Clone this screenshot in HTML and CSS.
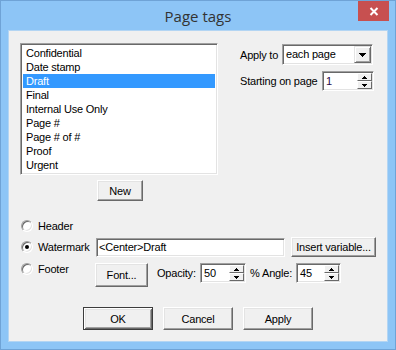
FILE: index.html
```html
<!DOCTYPE html>
<html>
<head>
<meta charset="utf-8">
<title>Page tags</title>
<link rel="stylesheet" href="styles.css">
</head>
<body>
<div class="window">
  <div class="titlebar">
    <span class="tb-spacer"></span>
    <div class="title">Page tags</div>
    <div class="close">
      <svg width="10" height="9" viewBox="0 0 10 9"><path d="M1.5 1 L8.5 8 M8.5 1 L1.5 8" stroke="#fff" stroke-width="2" fill="none"/></svg>
    </div>
  </div>
  <div class="client">
    <div class="top">
      <div class="left">
        <ul class="list">
          <li>Confidential</li>
          <li>Date stamp</li>
          <li class="sel">Draft</li>
          <li>Final</li>
          <li>Internal Use Only</li>
          <li>Page #</li>
          <li>Page # of #</li>
          <li>Proof</li>
          <li>Urgent</li>
        </ul>
        <button class="btn btn-new">New</button>
      </div>
      <div class="right">
        <div class="field">
          <span class="lbl lbl-apply">Apply to</span>
          <div class="combo">
            <span class="combo-text">each page</span>
            <span class="combo-btn"><svg width="7" height="4" viewBox="0 0 7 4" shape-rendering="crispEdges"><rect x="0" y="0" width="7" height="1"/><rect x="1" y="1" width="5" height="1"/><rect x="2" y="2" width="3" height="1"/><rect x="3" y="3" width="1" height="1"/></svg></span>
          </div>
        </div>
        <div class="field field-2">
          <span class="lbl lbl-start">Starting on page</span>
          <div class="spin spin-start">
            <span class="spin-text num">1</span>
            <span class="spin-btns">
              <span class="spin-b"><svg width="5" height="3" viewBox="0 0 5 3" shape-rendering="crispEdges"><rect x="2" y="0" width="1" height="1"/><rect x="1" y="1" width="3" height="1"/><rect x="0" y="2" width="5" height="1"/></svg></span>
              <span class="spin-b"><svg width="5" height="3" viewBox="0 0 5 3" shape-rendering="crispEdges"><rect x="0" y="0" width="5" height="1"/><rect x="1" y="1" width="3" height="1"/><rect x="2" y="2" width="1" height="1"/></svg></span>
            </span>
          </div>
        </div>
      </div>
    </div>

    <div class="options">
      <div class="opt-row row-header">
        <label class="radio-lbl"><span class="radio"></span>Header</label>
      </div>
      <div class="opt-row row-wm">
        <label class="radio-lbl"><span class="radio checked"></span>Watermark</label>
        <div class="textbox">&lt;Center&gt;Draft</div>
        <button class="btn btn-insert">Insert variable...</button>
      </div>
      <div class="opt-row row-footer">
        <label class="radio-lbl radio-lbl-footer"><span class="radio"></span>Footer</label>
        <button class="btn btn-font">Font...</button>
        <span class="lbl lbl-opacity">Opacity:</span>
        <div class="spin spin-opacity">
          <span class="spin-text">50</span>
          <span class="spin-btns">
            <span class="spin-b"><svg width="5" height="3" viewBox="0 0 5 3" shape-rendering="crispEdges"><rect x="2" y="0" width="1" height="1"/><rect x="1" y="1" width="3" height="1"/><rect x="0" y="2" width="5" height="1"/></svg></span>
            <span class="spin-b"><svg width="5" height="3" viewBox="0 0 5 3" shape-rendering="crispEdges"><rect x="0" y="0" width="5" height="1"/><rect x="1" y="1" width="3" height="1"/><rect x="2" y="2" width="1" height="1"/></svg></span>
          </span>
        </div>
        <span class="lbl lbl-pct">%</span>
        <span class="lbl lbl-angle">Angle:</span>
        <div class="spin spin-angle">
          <span class="spin-text">45</span>
          <span class="spin-btns">
            <span class="spin-b"><svg width="5" height="3" viewBox="0 0 5 3" shape-rendering="crispEdges"><rect x="2" y="0" width="1" height="1"/><rect x="1" y="1" width="3" height="1"/><rect x="0" y="2" width="5" height="1"/></svg></span>
            <span class="spin-b"><svg width="5" height="3" viewBox="0 0 5 3" shape-rendering="crispEdges"><rect x="0" y="0" width="5" height="1"/><rect x="1" y="1" width="3" height="1"/><rect x="2" y="2" width="1" height="1"/></svg></span>
          </span>
        </div>
      </div>
    </div>

    <div class="actions">
      <button class="btn btn-action btn-default">OK</button>
      <button class="btn btn-action">Cancel</button>
      <button class="btn btn-action">Apply</button>
    </div>
  </div>
</div>
</body>
</html>
```

FILE: styles.css
```css
* { box-sizing: border-box; }

body {
  margin: 0;
  font-family: "Liberation Sans", Arial, sans-serif;
  font-size: 11px;
  letter-spacing: -0.2px;
  color: #000;
  background: #8dc5f6;
}

.window {
  width: 396px;
  height: 350px;
  border: 1px solid #6fa3d6;
  background: #8dc5f6;
  display: flex;
  flex-direction: column;
}

.titlebar {
  height: 29px;
  display: grid;
  grid-template-columns: 1fr auto 1fr;
}

.title {
  font-family: "Open Sans", "Noto Sans", sans-serif;
  font-size: 15px;
  letter-spacing: 0;
  color: #333;
  line-height: 30px;
}

.close {
  justify-self: end;
  align-self: start;
  width: 31px;
  height: 20px;
  margin-right: 6px;
  background: #c75050;
  display: flex;
  align-items: center;
  justify-content: center;
}

.client {
  margin: 0 7px;
  height: 312px;
  background: #f0f0f0;
  border: 1px solid #b3d5f3;
  padding-top: 12px;
  display: flex;
  flex-direction: column;
}

.top {
  display: flex;
  margin-left: 11px;
}

.left {
  width: 198px;
  display: flex;
  flex-direction: column;
  align-items: center;
}

.list {
  width: 198px;
  height: 132px;
  margin: 0;
  padding: 1px;
  list-style: none;
  background: #fff;
  border: 1px solid;
  border-color: #a0a0a0 #fff #fff #a0a0a0;
  box-shadow: inset 1px 1px 0 #696969, inset -1px -1px 0 #e3e3e3;
}

.list li {
  height: 14px;
  line-height: 14px;
  padding-left: 3px;
  margin-left: 1px;
  margin-right: 1px;
  white-space: nowrap;
}

.list li:first-child { margin-top: 1px; }

.list li.sel {
  background: #3399ff;
  color: #fff;
}

.btn {
  font-family: "Liberation Sans", Arial, sans-serif;
  font-size: 11px;
  letter-spacing: -0.2px;
  color: #000;
  background: #f0f0f0;
  padding: 0;
  margin: 0;
  border: 1px solid;
  border-color: #fff #696969 #696969 #fff;
  box-shadow: inset -1px -1px 0 #a0a0a0, inset 1px 1px 0 #e3e3e3;
  display: flex;
  align-items: center;
  justify-content: center;
}

.btn-new {
  width: 46px;
  height: 21px;
  margin-top: 5px;
  margin-left: 2px;
}

.right {
  margin-left: 22px;
  padding-top: 1px;
  display: flex;
  flex-direction: column;
}

.field {
  display: flex;
  align-items: center;
}

.field-2 { margin-top: 6px; }

.lbl { white-space: nowrap; }
.lbl-apply { width: 42px; }
.lbl-start { width: 82px; }

.combo {
  width: 91px;
  height: 21px;
  background: #fff;
  border: 1px solid;
  border-color: #a0a0a0 #fff #fff #a0a0a0;
  box-shadow: inset 1px 1px 0 #696969, inset -1px -1px 0 #e3e3e3;
  padding: 1px;
  display: flex;
  align-items: stretch;
}

.combo-text {
  flex: 1;
  padding-left: 2px;
  line-height: 17px;
}

.combo-btn {
  width: 17px;
  background: #f0f0f0;
  border: 1px solid;
  border-color: #e3e3e3 #696969 #696969 #e3e3e3;
  box-shadow: inset 1px 1px 0 #fff, inset -1px -1px 0 #a0a0a0;
  display: flex;
  align-items: center;
  justify-content: center;
}

.spin {
  height: 20px;
  background: #fff;
  border: 1px solid;
  border-color: #a0a0a0 #fff #fff #a0a0a0;
  box-shadow: inset 1px 1px 0 #696969, inset -1px -1px 0 #e3e3e3;
  padding: 1px;
  display: flex;
}

.spin-start { width: 52px; }
.spin-opacity { width: 46px; }
.spin-angle { width: 45px; }

.spin-text {
  flex: 1;
  padding-left: 2px;
  line-height: 16px;
}

.num { color: #2a0848; }

.spin-btns {
  width: 15px;
  display: flex;
  flex-direction: column;
}

.spin-b {
  flex: 1;
  background: #f0f0f0;
  border: 1px solid;
  border-color: #fff #696969 #696969 #fff;
  display: flex;
  align-items: center;
  justify-content: center;
}

.options {
  margin-left: 11px;
  margin-top: 15px;
  display: flex;
  flex-direction: column;
}

.opt-row {
  display: flex;
  align-items: center;
}

.row-header { height: 20px; }
.row-wm { height: 20px; margin-top: 1px; }
.row-footer { height: 24px; margin-top: 6px; align-items: flex-start; }

.radio-lbl {
  width: 76px;
  padding-left: 1px;
  display: flex;
  align-items: center;
  gap: 5px;
  white-space: nowrap;
}

.radio-lbl-footer { height: 12px; }

.radio {
  width: 12px;
  height: 12px;
  border-radius: 50%;
  background: #fff;
  border: 1px solid;
  border-color: #a0a0a0 #fff #fff #a0a0a0;
  box-shadow: inset 1px 1px 0 #696969, inset -1px -1px 0 #e3e3e3;
  display: flex;
  align-items: center;
  justify-content: center;
  flex: none;
}

.radio.checked::after {
  content: "";
  width: 4px;
  height: 4px;
  border-radius: 50%;
  background: #000;
}

.textbox {
  width: 189px;
  height: 19px;
  background: #fff;
  border: 1px solid;
  border-color: #a0a0a0 #fff #fff #a0a0a0;
  box-shadow: inset 1px 1px 0 #696969, inset -1px -1px 0 #e3e3e3;
  padding-left: 2px;
  line-height: 17px;
  white-space: nowrap;
}

.btn-insert {
  width: 85px;
  height: 20px;
  margin-left: 6px;
}

.btn-font {
  width: 53px;
  height: 24px;
  margin-left: -1px;
}

.lbl-opacity {
  width: 43px;
  margin-left: 9px;
  margin-top: 3px;
  line-height: 14px;
}

.lbl-pct {
  width: 16px;
  padding-left: 4px;
  margin-top: 3px;
  line-height: 14px;
}

.lbl-angle {
  width: 34px;
  margin-top: 3px;
  line-height: 14px;
}

.actions {
  margin-top: 20px;
  display: flex;
  justify-content: center;
  gap: 10px;
}

.btn-action {
  width: 70px;
  height: 23px;
}

.btn-default {
  border: 1px solid #3c3c3c;
  box-shadow: inset 1px 1px 0 #fff, inset -1px -1px 0 #696969, inset 2px 2px 0 #e3e3e3, inset -2px -2px 0 #a0a0a0;
}
```
